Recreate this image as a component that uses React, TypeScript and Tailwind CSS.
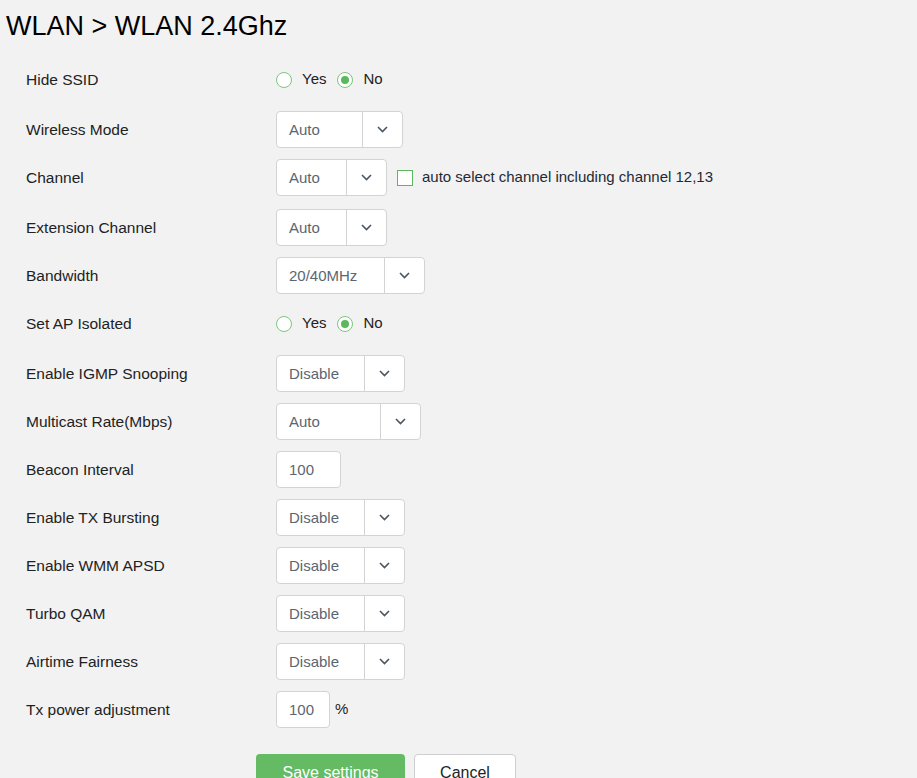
import React from "react";

type Row =
  | { label: string; kind: "radio"; value: "yes" | "no" }
  | { label: string; kind: "select"; value: string; width: number; split: number; extra?: boolean }
  | { label: string; kind: "input"; value: string; width: number; suffix?: string };

const rows: Row[] = [
  { label: "Hide SSID", kind: "radio", value: "no" },
  { label: "Wireless Mode", kind: "select", value: "Auto", width: 127, split: 86 },
  { label: "Channel", kind: "select", value: "Auto", width: 111, split: 70, extra: true },
  { label: "Extension Channel", kind: "select", value: "Auto", width: 111, split: 70 },
  { label: "Bandwidth", kind: "select", value: "20/40MHz", width: 149, split: 108 },
  { label: "Set AP Isolated", kind: "radio", value: "no" },
  { label: "Enable IGMP Snooping", kind: "select", value: "Disable", width: 129, split: 88 },
  { label: "Multicast Rate(Mbps)", kind: "select", value: "Auto", width: 145, split: 104 },
  { label: "Beacon Interval", kind: "input", value: "100", width: 65 },
  { label: "Enable TX Bursting", kind: "select", value: "Disable", width: 129, split: 88 },
  { label: "Enable WMM APSD", kind: "select", value: "Disable", width: 129, split: 88 },
  { label: "Turbo QAM", kind: "select", value: "Disable", width: 129, split: 88 },
  { label: "Airtime Fairness", kind: "select", value: "Disable", width: 129, split: 88 },
  { label: "Tx power adjustment", kind: "input", value: "100", width: 54, suffix: "%" },
];

function Radio({ checked, label }: { checked: boolean; label: string }) {
  return (
    <label className="flex items-center gap-[10px]">
      <span className="flex h-[16px] w-[16px] items-center justify-center rounded-full border border-[#7cc77c] bg-white">
        {checked && <span className="h-[8px] w-[8px] rounded-full bg-[#5cb85c]" />}
      </span>
      <span className="text-[15px] text-[#222]">{label}</span>
    </label>
  );
}

function Chevron() {
  return (
    <svg width="11" height="7" viewBox="0 0 11 7" fill="none">
      <path d="M1 1l4.5 4.5L10 1" stroke="#4a5560" strokeWidth="1.6" />
    </svg>
  );
}

function Select({ value, width, split }: { value: string; width: number; split: number }) {
  return (
    <div className="flex h-[37px] rounded-[4px] border border-[#d3d3d3] bg-white" style={{ width }}>
      <div
        className="flex items-center border-r border-[#d3d3d3] pl-[12px] pt-[2px] text-[15px] text-[#5b6670]"
        style={{ width: split }}
      >
        {value}
      </div>
      <div className="flex flex-1 items-center justify-center">
        <Chevron />
      </div>
    </div>
  );
}

export default function App() {
  return (
    <div className="min-h-screen bg-[#f2f2f2] pb-10" style={{ fontFamily: '"Liberation Sans", Arial, sans-serif' }}>
      <h1 className="pl-[6px] pt-[11px] text-[27px] leading-[30px] text-black">WLAN &gt; WLAN 2.4Ghz</h1>

      <div className="mt-[20px] flex flex-col">
        {rows.map((row) => (
          <div
            key={row.label}
            className={`flex ${row.kind === "radio" || (row.kind === "select" && row.extra) ? "h-[50px]" : "h-[48px]"}`}
          >
            <div className="flex h-[37px] w-[276px] items-center pl-[26px] text-[15.5px] text-[#222]">{row.label}</div>
            <div className="flex h-[37px] items-center">
              {row.kind === "radio" && (
                <div className="flex items-center gap-[11px]">
                  <Radio checked={row.value === "yes"} label="Yes" />
                  <Radio checked={row.value === "no"} label="No" />
                </div>
              )}
              {row.kind === "select" && (
                <>
                  <Select value={row.value} width={row.width} split={row.split} />
                  {row.extra && (
                    <div className="ml-[10px] flex items-center gap-[9px]">
                      <span className="h-[16px] w-[16px] border border-[#5cb85c] bg-white" />
                      <span className="text-[15px] text-[#1f2a36]">auto select channel including channel 12,13</span>
                    </div>
                  )}
                </>
              )}
              {row.kind === "input" && (
                <>
                  <div
                    className="flex h-[37px] items-center rounded-[4px] border border-[#d3d3d3] bg-white pl-[12px] pt-[2px] text-[15px] text-[#5b6670]"
                    style={{ width: row.width }}
                  >
                    {row.value}
                  </div>
                  {row.suffix && <span className="ml-[5px] text-[15px] text-[#222]">{row.suffix}</span>}
                </>
              )}
            </div>
          </div>
        ))}
      </div>

      <div className="mt-[15px] flex gap-[9px] pl-[256px]">
        <button className="h-[38px] w-[149px] rounded-[4px] bg-[#64bb64] text-[16px] text-white">Save settings</button>
        <button className="h-[38px] w-[102px] rounded-[4px] border border-[#cfcfcf] bg-white text-[16px] text-[#222]">
          Cancel
        </button>
      </div>
    </div>
  );
}
